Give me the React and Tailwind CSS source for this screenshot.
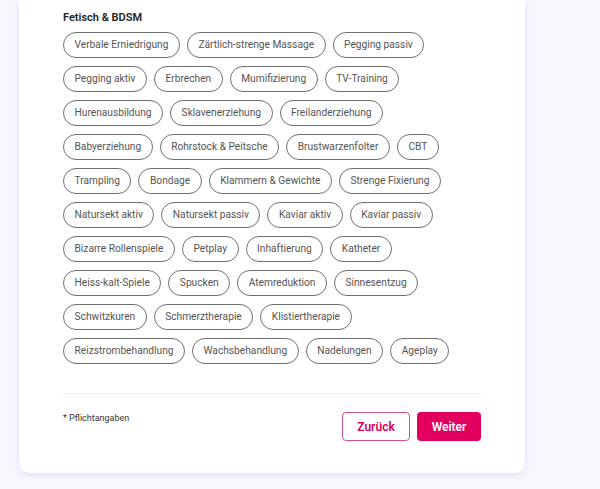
const tags = [
  'Verbale Erniedrigung',
  'Zärtlich-strenge Massage',
  'Pegging passiv',
  'Pegging aktiv',
  'Erbrechen',
  'Mumifizierung',
  'TV-Training',
  'Hurenausbildung',
  'Sklavenerziehung',
  'Freilanderziehung',
  'Babyerziehung',
  'Rohrstock & Peitsche',
  'Brustwarzenfolter',
  'CBT',
  'Trampling',
  'Bondage',
  'Klammern & Gewichte',
  'Strenge Fixierung',
  'Natursekt aktiv',
  'Natursekt passiv',
  'Kaviar aktiv',
  'Kaviar passiv',
  'Bizarre Rollenspiele',
  'Petplay',
  'Inhaftierung',
  'Katheter',
  'Heiss-kalt-Spiele',
  'Spucken',
  'Atemreduktion',
  'Sinnesentzug',
  'Schwitzkuren',
  'Schmerztherapie',
  'Klistiertherapie',
  'Reizstrombehandlung',
  'Wachsbehandlung',
  'Nadelungen',
  'Ageplay',
];

export default function App() {
  return (
    <div className="min-h-[489px] bg-[#f7f7fd] font-['Roboto',sans-serif] pb-[15px]">
      <div className="ml-[19px] w-[506px] bg-white rounded-b-[10px] shadow-[0_2px_6px_rgba(120,110,230,0.18)] px-[44px] pt-[11px] pb-[32px]">
        <h3 className="text-[11px] font-semibold text-[#222] leading-[14px] mb-[7px]">Fetisch &amp; BDSM</h3>
        <div className="flex flex-wrap gap-x-[7px] gap-y-[8px] pr-[20px]">
          {tags.map((t) => (
            <button
              key={t}
              type="button"
              className="h-[26px] px-[10.5px] rounded-full border border-[#707070] text-[10.2px] text-[#555] leading-none whitespace-nowrap bg-white"
            >
              {t}
            </button>
          ))}
        </div>
        <div className="mt-[29px] border-t border-[#ececf0]" />
        <div className="mt-[18px] flex items-center justify-between">
          <p className="text-[9px] text-[#333] -mt-[16px]">* Pflichtangaben</p>
          <div className="flex gap-[7px]">
            <button
              type="button"
              className="w-[68px] h-[29px] rounded-[4px] border border-[#d0547f] text-[#d4005a] text-[12px] font-semibold bg-white"
            >
              Zurück
            </button>
            <button
              type="button"
              className="w-[64px] h-[29px] rounded-[4px] bg-[#e2005f] text-white text-[12px] font-semibold"
            >
              Weiter
            </button>
          </div>
        </div>
      </div>
    </div>
  );
}
